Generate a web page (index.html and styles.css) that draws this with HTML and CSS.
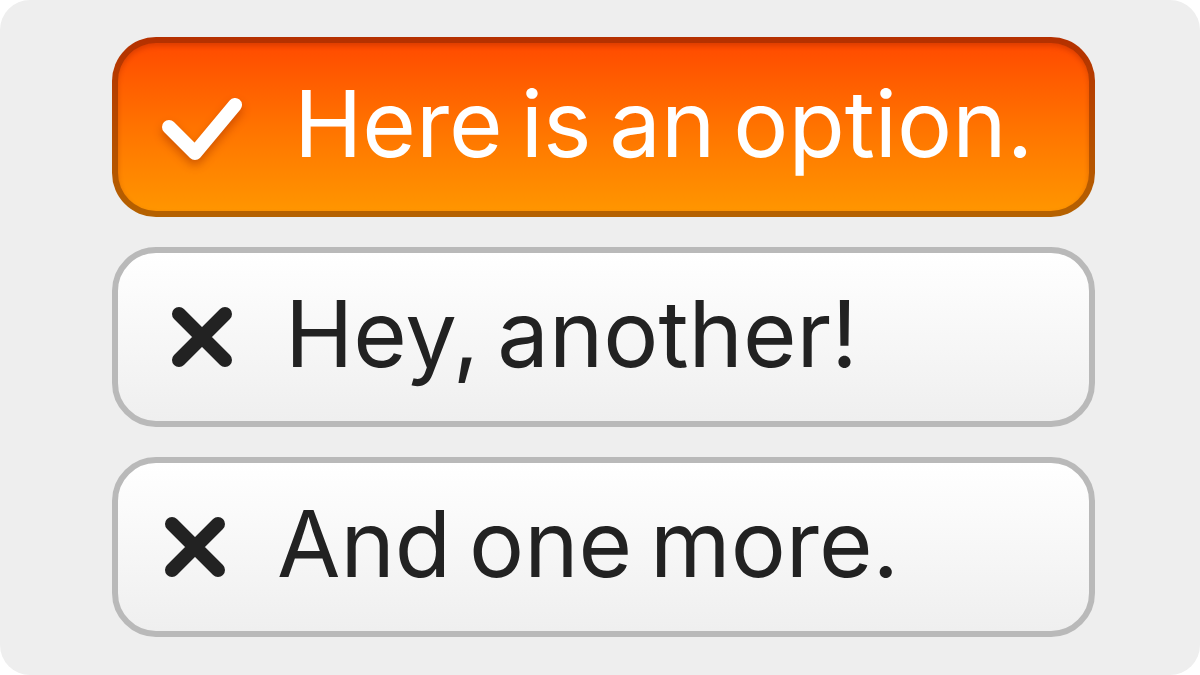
FILE: index.html
```html
<!DOCTYPE html>
<html lang="en">
<head>
<meta charset="utf-8">
<title>Options</title>
<link rel="stylesheet" href="styles.css">
</head>
<body>
<main class="frame">
  <div class="option option-selected opt-a">
    <svg class="icon icon-check" viewBox="0 0 80 80" width="80" height="80" aria-hidden="true">
      <path d="M7 40 L33 66 L73 18" fill="none" stroke="#fff" stroke-width="14" stroke-linecap="round" stroke-linejoin="round"/>
    </svg>
    <span class="label">Here is an option.</span>
  </div>
  <div class="option opt-b">
    <svg class="icon icon-x" viewBox="0 0 80 80" width="80" height="80" aria-hidden="true">
      <path d="M17 17 L63 63 M63 17 L17 63" fill="none" stroke="#222" stroke-width="14" stroke-linecap="round"/>
    </svg>
    <span class="label">Hey, another!</span>
  </div>
  <div class="option opt-c">
    <svg class="icon icon-x" viewBox="0 0 80 80" width="80" height="80" aria-hidden="true">
      <path d="M17 17 L63 63 M63 17 L17 63" fill="none" stroke="#222" stroke-width="14" stroke-linecap="round"/>
    </svg>
    <span class="label">And one more.</span>
  </div>
</main>
</body>
</html>
```

FILE: styles.css
```css
html, body {
  margin: 0;
  padding: 0;
  background: #ffffff;
}

.frame {
  box-sizing: border-box;
  width: 1200px;
  height: 675px;
  background: #eeeeee;
  border-radius: 30px;
  padding: 37px 105px 0 112px;
  display: flex;
  flex-direction: column;
  gap: 30px;
  font-family: "Inter", "Liberation Sans", sans-serif;
}

.option {
  box-sizing: border-box;
  height: 180px;
  border-radius: 44px;
  border: 6px solid #b9b9b9;
  background: linear-gradient(180deg, #ffffff 0%, #efefef 100%);
  display: flex;
  align-items: center;
  color: #222222;
}

.option-selected {
  border-color: rgba(60, 10, 0, 0.38);
  background: linear-gradient(180deg, #ff4800 0%, #ff7300 50%, #ff9800 100%);
  background-origin: border-box;
  box-shadow: inset 0 3px 5px rgba(120, 20, 0, 0.25);
  color: #ffffff;
}

.icon {
  flex: none;
  display: block;
}

.icon-check {
  filter: drop-shadow(0 5px 5px rgba(150, 40, 0, 0.45));
}

.label {
  font-size: 92px;
  font-weight: 400;
  line-height: 1;
  word-spacing: -8px;
  white-space: nowrap;
  margin-top: -6px;
}

.opt-a {
  padding-left: 44px;
}
.opt-a .label {
  margin-left: 52px;
}

.opt-b {
  padding-left: 44px;
}
.opt-b .label {
  margin-left: 43px;
}

.opt-c {
  padding-left: 37px;
}
.opt-c .label {
  margin-left: 42px;
}
```
